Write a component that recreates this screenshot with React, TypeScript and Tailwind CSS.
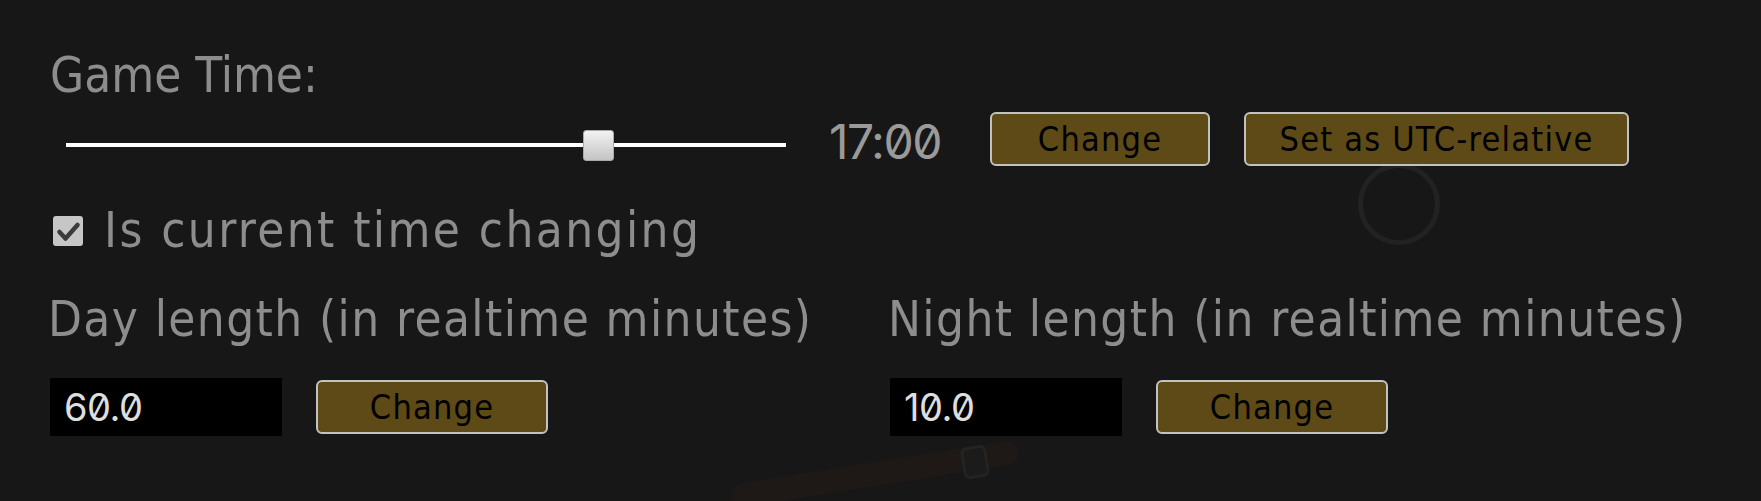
import React from "react";

// Labelled value + "Change" button pair used for day / night length.
function LengthField({ label, value }: { label: string; value: string }) {
  return (
    <div className="flex flex-col">
      <p className="ml-[-2px] text-[49px] leading-[50px] tracking-[1.4px] text-[#8d8d8d] whitespace-nowrap">
        {label}
      </p>
      <div className="mt-[33px] flex items-center gap-[34px]">
        <input
          readOnly
          value={value}
          className="h-[58px] w-[232px] bg-black px-[14px] font-['Inter',sans-serif] text-[38px] leading-none tracking-[-0.5px] text-[#dedede] slashed-zero outline-none"
        />
        <GoldButton className="w-[232px]">Change</GoldButton>
      </div>
    </div>
  );
}

function GoldButton({
  children,
  className = "",
}: {
  children: React.ReactNode;
  className?: string;
}) {
  return (
    <button
      type="button"
      className={`flex h-[54px] items-center justify-center rounded-[6px] border-2 border-[#c2c2c2] bg-[#5e4a16] text-[34px] leading-none tracking-[1.2px] text-black ${className}`}
    >
      {children}
    </button>
  );
}

export default function App() {
  return (
    <div className="relative h-[501px] w-full overflow-hidden bg-[#171717] font-['DejaVu_Sans_Condensed','Liberation_Sans',sans-serif]">
      {/* faint background art */}
      <div className="pointer-events-none absolute left-[1358px] top-[163px] h-[82px] w-[82px] rounded-full border-[5px] border-[#222222]" />
      <div className="pointer-events-none absolute left-[730px] top-[462px] h-[24px] w-[290px] -rotate-[9deg] rounded-full bg-[#1e1917]" />
      <div className="pointer-events-none absolute left-[962px] top-[446px] h-[32px] w-[26px] -rotate-[9deg] rounded-[6px] border-[3px] border-[#232323] bg-[#1b1b1b]" />

      <div className="relative flex flex-col pl-[50px] pt-[51px]">
        <p className="text-[49px] leading-[50px] text-[#8d8d8d]">Game Time:</p>

        {/* time slider row */}
        <div className="mt-[11px] flex items-start">
          <div className="relative ml-[16px] mt-[18px] h-[31px] w-[720px]">
            <div className="absolute left-0 top-[13px] h-[4px] w-full bg-white" />
            <div className="absolute left-[517px] top-0 h-[31px] w-[31px] rounded-[3px] border border-[#a9a9a9] bg-gradient-to-b from-[#f2f2f2] to-[#c4c4c4]" />
          </div>
          <span className="ml-[43px] mt-[6px] w-[161px] font-['Inter',sans-serif] text-[48px] leading-[48px] tracking-[-1.5px] text-[#9a9a9a] slashed-zero">
            17:00
          </span>
          <GoldButton className="w-[220px]">Change</GoldButton>
          <GoldButton className="ml-[34px] w-[385px]">Set as UTC-relative</GoldButton>
        </div>

        {/* checkbox row */}
        <label className="mt-[40px] flex items-center">
          <span className="ml-[3px] flex h-[30px] w-[30px] items-center justify-center rounded-[3px] bg-[#c6c6c6]">
            <svg viewBox="0 0 30 30" className="h-[30px] w-[30px]" fill="none">
              <path
                d="M6.5 16 L12.5 22.5 L24.5 9"
                stroke="#3b3b3b"
                strokeWidth="4.5"
                strokeLinecap="round"
                strokeLinejoin="round"
              />
            </svg>
          </span>
          <span className="ml-[21px] text-[49px] leading-[50px] tracking-[2.4px] text-[#8d8d8d]">
            Is current time changing
          </span>
        </label>

        {/* day / night lengths */}
        <div className="mt-[39px] grid grid-cols-[840px_1fr]">
          <LengthField label="Day length (in realtime minutes)" value="60.0" />
          <LengthField label="Night length (in realtime minutes)" value="10.0" />
        </div>
      </div>
    </div>
  );
}
